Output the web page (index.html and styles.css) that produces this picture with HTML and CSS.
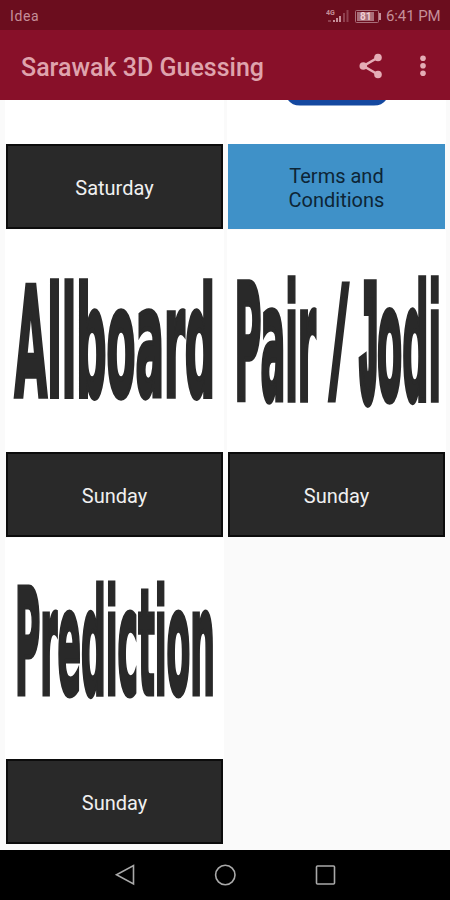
FILE: index.html
```html
<!DOCTYPE html>
<html lang="en">
<head>
<meta charset="utf-8">
<title>Sarawak 3D Guessing</title>
<link rel="stylesheet" href="styles.css">
</head>
<body>
<header class="status">
  <span class="carrier">Idea</span>
  <svg class="signal" width="26" height="16" viewBox="0 0 26 16">
    <text class="net" x="0" y="7">4G</text>
    <path class="bar" d="M8 14v-2M11 14v-4M14 14V8"/>
    <path class="bar dim" d="M2 13h3M18 14V5M21.5 14V2"/>
  </svg>
  <svg class="battery" width="27" height="13" viewBox="0 0 27 13">
    <rect class="cell" x=".5" y=".5" width="23" height="12" rx="1"/>
    <rect class="charge" x="2" y="2" width="17" height="9"/>
    <path class="bar" d="M25 3v7"/>
    <text class="level" x="5" y="10.2">81</text>
  </svg>
  <span class="clock">6:41 PM</span>
</header>
<div class="toolbar">
  <h1 class="title">Sarawak 3D Guessing</h1>
  <svg class="share" width="26" height="28" viewBox="0 0 26 28">
    <path d="M19 4.5 4.5 13 19 21.5"/>
    <circle cx="19" cy="4.5" r="3.8"/><circle cx="4.3" cy="13" r="3.8"/><circle cx="19" cy="21.5" r="3.8"/>
  </svg>
  <svg class="more" width="8" height="24" viewBox="0 0 8 24">
    <circle cx="4" cy="3.3" r="2.8"/><circle cx="4" cy="10.8" r="2.8"/><circle cx="4" cy="18.3" r="2.8"/>
  </svg>
</div>
<main class="grid">
  <section class="card first">
    <div class="picture"></div>
    <div class="label">Saturday</div>
  </section>
  <section class="card first">
    <div class="picture">
      <svg width="217" height="44" viewBox="0 0 217 44"><path class="badge" d="M60 0H158Q154 5.500 146 5.500H72Q64 5.500 60 0Z"/></svg>
    </div>
    <div class="label terms">Terms and<br>Conditions</div>
  </section>
  <section class="card">
    <div class="picture">
      <svg width="217" height="223" viewBox="0 0 217 223"><text class="word" transform="translate(8.5 166) scale(.5 1.52)" textLength="401" lengthAdjust="spacingAndGlyphs">Allboard</text></svg>
    </div>
    <div class="label">Sunday</div>
  </section>
  <section class="card">
    <div class="picture">
      <svg width="217" height="223" viewBox="0 0 217 223">
        <text class="word" transform="translate(6.500 170) scale(.5 1.6)" textLength="163" lengthAdjust="spacingAndGlyphs">Pair</text>
        <text class="word" transform="translate(101 156.500) scale(.5 1.4)" textLength="39" lengthAdjust="spacingAndGlyphs">/</text>
        <text class="word hook" transform="translate(131 167) scale(.32 1.65)">J</text>
        <text class="word" transform="translate(149 170) scale(.5 1.6)" textLength="128" lengthAdjust="spacingAndGlyphs">odi</text>
      </svg>
    </div>
    <div class="label">Sunday</div>
  </section>
  <section class="card">
    <div class="picture">
      <svg width="217" height="223" viewBox="0 0 217 223"><text class="word" transform="translate(9 156) scale(.5 1.46)" textLength="400" lengthAdjust="spacingAndGlyphs">Prediction</text></svg>
    </div>
    <div class="label">Sunday</div>
  </section>
</main>
<nav class="navbar">
  <svg width="24" height="24" viewBox="0 0 24 24"><path d="M20.5 2.5v18.5L3.5 11.8Z"/></svg>
  <svg width="24" height="24" viewBox="0 0 24 24"><circle cx="12.300" cy="12" r="9.7"/></svg>
  <svg width="24" height="24" viewBox="0 0 24 24"><rect x="3.500" y="3" width="18" height="18" rx="1"/></svg>
</nav>
</body>
</html>
```
FILE: styles.css
```css
* { box-sizing: border-box; }
body {
  margin: 0;
  width: 450px;
  height: 900px;
  display: flex;
  flex-direction: column;
  overflow: hidden;
  background: #fafafa;
  font-family: Roboto, sans-serif;
}
svg { display: block; flex: none; }
.status {
  height: 30px;
  flex: none;
  display: flex;
  align-items: center;
  padding: 2px 10px 0;
  background: #6b0d1e;
  color: #c58f99;
  font-size: 14px;
}
.carrier { flex: 1; letter-spacing: .6px; }
.signal { margin-right: 3px; }
.battery { margin-right: 4px; }
.clock { width: 54px; font-size: 15px; letter-spacing: -.1px; white-space: nowrap; }
.bar { stroke: #c58f99; stroke-width: 2; fill: none; }
.dim { opacity: .4; }
.net { font-size: 7px; font-weight: 700; fill: #c58f99; }
.cell { fill: none; stroke: #a96f7a; }
.charge { fill: #a96f7a; }
.level { font-size: 10px; font-weight: 700; fill: #f0cdd3; }
.toolbar {
  height: 70px;
  flex: none;
  display: flex;
  align-items: center;
  padding: 4px 23px 0 21px;
  background: #881029;
}
.title {
  flex: 1;
  margin: 0;
  font-size: 25px;
  font-weight: 500;
  color: #dfa3ad;
  white-space: nowrap;
}
.share { margin-right: 34px; fill: #e5adb6; }
.share path { fill: none; stroke: #e5adb6; stroke-width: 2.6; }
.more { fill: #e5adb6; }
.grid {
  height: 750px;
  flex: none;
  display: grid;
  grid-template-columns: 217px 217px;
  grid-template-rows: 129px 307px 306px;
  column-gap: 5px;
  row-gap: 1px;
  align-content: start;
  padding-left: 6px;
}
.card { display: flex; flex-direction: column; }
.picture { flex: 1; background: #fff; min-height: 0; box-shadow: 0 0 0 1px #fff; clip-path: inset(0 -1px); }
.label {
  height: 85px;
  flex: none;
  display: flex;
  align-items: center;
  justify-content: center;
  padding-top: 2px;
  border: 2px solid #0c0c0c;
  background: #292929;
  color: #f0f0f0;
  font-size: 20px;
  line-height: 24px;
  text-align: center;
}
.terms { border-color: #3f91c8; background: #3f91c8; color: #0d2536; }
.badge { fill: #1448a0; }
.word {
  font-family: "DejaVu Sans Condensed", "DejaVu Sans", sans-serif;
  font-stretch: condensed;
  font-size: 100px;
  font-weight: 700;
  fill: #292929;
  stroke: #292929;
  stroke-width: 3.5;
}
.hook { font-family: "Liberation Mono", monospace; stroke-width: 11; }
.navbar {
  height: 50px;
  flex: none;
  display: flex;
  justify-content: center;
  align-items: center;
  gap: 76px;
  background: #000;
}
.navbar svg { fill: none; stroke: #a9a9a9; stroke-width: 1.6; }
```
